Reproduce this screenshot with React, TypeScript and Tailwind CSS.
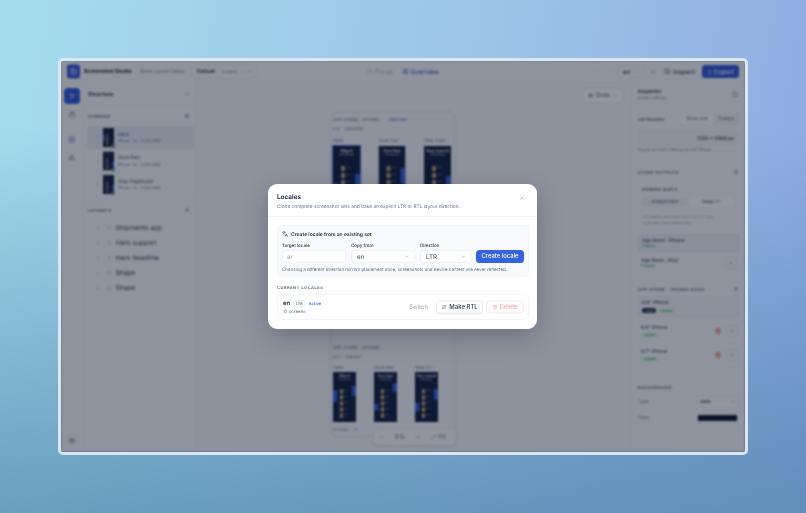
import { ArrowRightLeft, ArrowLeft, ArrowRight, ChevronDown, Download, Focus, Grip, GripVertical, Hand, Languages, Layers, Link2, Maximize2, Minus, MousePointer2, PanelRight, Plus, Shapes, Square, Trash2, Type, X, LayoutGrid, Archive, Image } from 'lucide-react';

const screens = [
  { name: 'Hero', active: true },
  { name: 'Save Fast', active: false },
  { name: 'Stay Organized', active: false },
];

const layers = [
  { name: 'Shipments app', text: false },
  { name: 'Hero support', text: true },
  { name: 'Hero headline', text: true },
  { name: 'Shape', text: false },
  { name: 'Shape', text: false },
];

interface Bar {
  y: number;
  h: number;
  right?: boolean;
}

const topRow = [
  { label: 'Hero', title: 'Ship it', bars: [{ y: 37, h: 20 }, { y: 28, h: 14, right: true }] },
  { label: 'Save Fast', title: 'Save fast', bars: [{ y: 22, h: 16, right: true }] },
  { label: 'Stop Orga...', title: 'Stay synced', bars: [{ y: 30, h: 14, right: true }] },
];

const bottomRow = [
  { label: 'Hero', title: 'Ship it', bars: [{ y: 21, h: 14 }, { y: 16, h: 12, right: true }] },
  { label: 'Save Fast', title: 'Save fast', bars: [{ y: 13, h: 10, right: true }, { y: 37, h: 8 }] },
  { label: 'Stop Or...', title: 'Stay synced', bars: [{ y: 36, h: 10 }, { y: 20, h: 12, right: true }] },
];

function PhoneThumb({ title, bars, width, height }: { title: string; bars: Bar[]; width: number; height: number }) {
  return (
    <svg width={width} height={height} viewBox="0 0 27 58" preserveAspectRatio="none" className="block">
      <rect width="27" height="58" fill="#0c1a3a" />
      <text x="13.5" y="6" textAnchor="middle" fontSize="4.5" fontWeight="700" fill="#fff" fontFamily="Liberation Serif, serif">{title}</text>
      <rect x="6" y="8" width="15" height="1" fill="#8a94ad" />
      {bars.map((b, i) => (
        <rect key={i} x={b.right ? 22 : 0} y={b.y} width="5" height={b.h} fill="#2f5fd8" />
      ))}
      {[20, 27, 34, 41, 48].map((y) => (
        <g key={y}>
          <rect x="8" y={y} width="4" height="5" fill="#b89e78" />
          <rect x="13" y={y + 1} width="5" height="1" fill="#59647f" />
        </g>
      ))}
    </svg>
  );
}

function Pill({ children, green }: { children: React.ReactNode; green?: boolean }) {
  return <span className={`px-[3px] h-[5px] flex items-center rounded-full text-[3.5px] ${green ? 'bg-[#d6f5e0] text-[#168a4a]' : 'bg-[#14213d] text-white'}`}>{children}</span>;
}

function SectionHead({ label, plus }: { label: string; plus?: boolean }) {
  return (
    <div className="flex items-center justify-between h-[8px]">
      <span className="text-[4px] font-semibold tracking-[0.14em] text-[#475569]">{label}</span>
      {plus && <Plus size={6} strokeWidth={2.5} className="text-[#3b5bb5]" />}
    </div>
  );
}

function AppBehind() {
  return (
    <div className="w-full h-full flex flex-col bg-[#f8fafc] text-[#0f172a] blur-[1.2px]">
      <header className="h-[22px] shrink-0 flex items-center pl-[6px] pr-[6px] border-b border-[#eef1f6]">
        <div className="w-[13px] h-[14px] rounded-[3px] bg-[#2d54d8] flex items-center justify-center">
          <Image size={7} className="text-white" />
        </div>
        <span className="ml-[4px] w-[47px] whitespace-nowrap text-[5.3px] font-bold">Screenshot Studio</span>
        <span className="ml-[9px] w-[45px] whitespace-nowrap text-[4.8px] text-[#64748b]">Store Launch Demo</span>
        <div className="ml-[5px] w-[68px] h-[15px] rounded-full border border-[#e8ecf2] flex items-center pl-[6px] gap-[7px]">
          <span className="text-[5.2px] font-semibold">Default</span>
          <span className="text-[4px] text-[#64748b]">Isolated</span>
          <ChevronDown size={5} className="ml-[3px] text-[#64748b]" />
        </div>
        <div className="ml-[109px] flex items-center gap-[10px]">
          <div className="flex items-center gap-[2px] text-[#94a3b8]">
            <Focus size={6} />
            <span className="text-[6.2px]">Focus</span>
          </div>
          <div className="flex items-center gap-[2px] text-[#3556b8]">
            <LayoutGrid size={6} />
            <span className="text-[6.2px] font-medium">Overview</span>
          </div>
        </div>
        <div className="ml-auto flex items-center">
          <ArrowLeft size={5} className="text-[#cbd5e1]" />
          <ArrowRight size={5} className="ml-[8px] text-[#cbd5e1]" />
          <div className="ml-[4px] w-[28px] h-[13px] rounded-[4px] border border-[#eceff4] flex items-center pl-[5px] gap-[5px]">
            <span className="text-[6px] font-medium">en</span>
            <ChevronDown size={4} className="text-[#94a3b8]" />
          </div>
          <Link2 size={6} className="ml-[5px] text-[#94a3b8]" />
          <PanelRight size={6} className="ml-[8px] text-[#334155]" />
          <span className="ml-[3px] text-[6.2px] font-medium text-[#334155]">Inspect</span>
          <div className="ml-[7px] w-[37px] h-[13px] rounded-[3px] bg-[#2d54d8] flex items-center justify-center gap-[2px] text-white">
            <Download size={5} />
            <span className="text-[6.2px] font-medium">Export</span>
          </div>
        </div>
      </header>
      <div className="flex-1 flex min-h-0">
        <nav className="w-[22px] shrink-0 flex flex-col items-center pt-[5px]">
          <div className="w-[16px] h-[16px] rounded-[4px] bg-[#2d54d8] flex items-center justify-center">
            <MousePointer2 size={7} className="text-white" />
          </div>
          <Hand size={7} className="mt-[7px] text-[#64748b]" />
          <Layers size={7} className="mt-[18px] text-[#4763b8]" />
          <Shapes size={7} className="mt-[11px] text-[#64748b]" />
          <div className="mt-auto mb-[4px] w-[14px] h-[14px] rounded-[3px] border border-[#eceff4] flex items-center justify-center">
            <Archive size={6} className="text-[#475569]" />
          </div>
        </nav>
        <aside className="w-[113px] shrink-0 border-x border-[#f0f2f6] flex flex-col">
          <div className="h-[23px] flex items-center justify-between pl-[4px] pr-[5px] border-b border-[#f0f2f6]">
            <span className="text-[5.6px] font-semibold">Structure</span>
            <X size={5} className="text-[#64748b]" />
          </div>
          <div className="pl-[4px] pr-[5px] pt-[6px]">
            <SectionHead label="SCREENS" plus />
          </div>
          <div className="pl-[3px] pr-[1px] pt-[6px] pb-[4px] flex flex-col border-b border-[#f0f2f6]">
            {screens.map((s, i) => (
              <div key={s.name} className={`h-[23.4px] flex items-center rounded-[4px] pl-[8px] ${s.active ? 'bg-[#e8ebf2]' : ''}`}>
                <GripVertical size={4} className="text-[#cbd5e1]" />
                <div className="relative ml-[4px]">
                  <PhoneThumb title="" bars={i === 0 ? [{ y: 22, h: 16 }] : [{ y: 32, h: 12, right: true }]} width={11} height={19} />
                  <span className="absolute right-[-1px] bottom-[-1px] w-[4px] h-[4px] rounded-full bg-[#64748b]" />
                </div>
                <div className="ml-[4px] flex flex-col">
                  <span className={`text-[4.8px] leading-[7px] ${s.active ? 'text-[#2d54d8] font-medium' : 'text-[#334155]'}`}>{s.name}</span>
                  <span className="text-[3.7px] leading-[6px] text-[#64748b]">iPhone · en · 1320x2868</span>
                </div>
              </div>
            ))}
          </div>
          <div className="pl-[4px] pr-[5px] pt-[5px]">
            <SectionHead label="LAYERS  5" plus />
          </div>
          <div className="pl-[12px] pt-[6px] flex flex-col">
            {layers.map((l, i) => (
              <div key={i} className="h-[15.2px] flex items-center text-[#334155]">
                <GripVertical size={4} className="text-[#cbd5e1]" />
                <span className="ml-[7px] mr-[4px]">
                  {l.text ? <Type size={4.5} className="text-[#94a3b8]" /> : <Square size={4.5} className="text-[#94a3b8]" />}
                </span>
                <span className="text-[6.6px]">{l.name}</span>
              </div>
            ))}
          </div>
        </aside>
        <main className="relative flex-1 bg-[#f6f7fa] pt-[28px] pl-[134px]">
          <div className="absolute top-[5px] right-[8px] w-[41px] h-[15px] rounded-[4px] bg-white border border-[#eceff4] flex items-center justify-center gap-[3px] text-[#475569]">
            <Grip size={5} />
            <span className="text-[6.5px]">Dots</span>
            <ChevronDown size={4} />
          </div>
          <div className="w-[125px] h-[326px] rounded-[8px] border border-[#e2e5ec] px-[2px] pt-[5px]">
            <div className="flex gap-[9px] text-[3.8px] font-semibold tracking-[0.12em] text-[#64748b] h-[6px] items-center">
              <span>APP STORE · IPHONE</span>
              <span className="text-[#3b5bd0]">EDITING</span>
            </div>
            <div className="flex gap-[4px] text-[3.5px] font-semibold tracking-[0.05em] text-[#64748b] mt-[3px] h-[6px] items-center">
              <span>6.9"</span>
              <span>ISOLATED</span>
            </div>
            <div className="mt-[6px] flex gap-[18.5px]">
              {topRow.map((t, i) => (
                <div key={t.label} className="w-[27px]">
                  <div className={`text-[4.4px] h-[6px] leading-[6px] whitespace-nowrap ${i === 0 ? 'text-[#3b5bd0]' : 'text-[#64748b]'}`}>{t.label}</div>
                  <div className={`mt-[2px] ${i === 0 ? 'outline outline-[#4f6fd8]' : ''}`}>
                    <PhoneThumb title={t.title} bars={t.bars} width={27} height={58} />
                  </div>
                </div>
              ))}
            </div>
            <div className="mt-[141px] flex flex-col">
              <div className="text-[3.8px] font-semibold tracking-[0.12em] text-[#64748b] h-[6px] flex items-center">APP STORE · IPHONE</div>
              <div className="flex gap-[4px] text-[3.5px] font-semibold tracking-[0.05em] text-[#64748b] mt-[3px] h-[6px] items-center">
                <span>6.7"</span>
                <span>VARIANT</span>
              </div>
              <div className="mt-[5px] flex gap-[18px]">
                {bottomRow.map((t) => (
                  <div key={t.label} className="w-[23px]">
                    <div className="text-[4.4px] h-[6px] leading-[6px] whitespace-nowrap text-[#64748b]">{t.label}</div>
                    <div className="mt-[1px]">
                      <PhoneThumb title={t.title} bars={t.bars} width={23} height={50} />
                    </div>
                  </div>
                ))}
              </div>
              <span className="mt-[5px] text-[3.8px] text-[#64748b] tracking-[0.08em]">IPHONE · 14</span>
            </div>
          </div>
          <div className="absolute top-[346px] left-[178px] w-[81px] h-[16px] rounded-[4px] bg-[#fdfdfe] shadow-[0_1px_3px_rgba(15,23,42,0.15)] flex items-center justify-around pr-[4px] text-[#64748b]">
            <Minus size={5} />
            <span className="text-[6.5px] font-medium">5%</span>
            <Plus size={5} />
            <span className="flex items-center gap-[2px] text-[6.5px]"><Maximize2 size={5} />Fit</span>
          </div>
        </main>
        <aside className="w-[114px] shrink-0 border-l border-[#f0f2f6] flex flex-col px-[6px]">
          <div className="h-[23px] flex items-center justify-between">
            <div className="flex flex-col">
              <span className="text-[5.2px] font-semibold leading-[7px]">Inspector</span>
              <span className="text-[3.8px] leading-[6px] text-[#64748b]">Screen settings</span>
            </div>
            <PanelRight size={6} className="text-[#64748b] mr-[1px]" />
          </div>
          <div className="mt-[7px] flex items-center justify-between">
            <span className="text-[4px] font-semibold tracking-[0.14em] text-[#475569]">ARTBOARD</span>
            <div className="w-[60px] h-[12px] rounded-[3px] bg-[#eff2f6] flex items-center p-[1px] text-[4.6px] text-[#475569]">
              <span className="w-[34px] h-full rounded-[2px] bg-white flex items-center justify-center">Store size</span>
              <span className="flex-1 text-center">Custom</span>
            </div>
          </div>
          <div className="mt-[5px] h-[16px] rounded-[3px] bg-[#f3f5f8] flex items-center justify-end pr-[5px] text-[5px] font-medium text-[#334155]">1320 × 2868 px</div>
          <div className="mt-[1px] h-[6px] text-[3.7px] leading-[6px] text-[#64748b] whitespace-nowrap">Exports at 1320 × 2868 px for 6.9" iPhone.</div>
          <div className="mt-[15px]"><SectionHead label="STORE OUTPUTS" plus /></div>
          <div className="mt-[10px] pl-[4px] pr-[5px] h-[44px] flex flex-col">
            <span className="text-[4px] font-semibold tracking-[0.12em] text-[#475569] h-[6px] leading-[6px]">SCREEN SLOTS</span>
            <div className="mt-[5px] h-[10px] rounded-[3px] bg-[#eff2f6] flex text-[4.5px] text-[#475569]">
              <span className="w-[46px] flex items-center justify-center">Independent</span>
              <span className="flex-1 bg-white rounded-[3px] flex items-center justify-center font-medium">Keep 1:1</span>
            </div>
            <span className="mt-[7px] text-[3.6px] leading-[6px] text-[#94a3b8] whitespace-nowrap">Add, delete, and order mirror across sizes.<br />Layer edits stay independent.</span>
          </div>
          <div className="mt-[4px] h-[18px] rounded-[3px] bg-[#eef1f7] border border-[#e4e8f0] px-[3px] flex flex-col justify-center">
            <span className="text-[4.8px] font-medium leading-[6px] text-[#334155]">App Store · iPhone</span>
            <span className="text-[3.6px] leading-[5px] text-[#16a34a]">Created</span>
          </div>
          <div className="mt-[1px] h-[20px] px-[3px] flex items-center justify-between">
            <div className="flex flex-col">
              <span className="text-[4.8px] font-medium leading-[6px] text-[#334155]">App Store · iPad</span>
              <span className="text-[3.6px] leading-[5px] text-[#16a34a]">Created</span>
            </div>
            <div className="w-[12px] h-[12px] rounded-[3px] border border-[#e8ebf1] flex items-center justify-center mr-[-1px]"><Plus size={4} className="text-[#64748b]" /></div>
          </div>
          <div className="mt-[12px]"><SectionHead label="APP STORE · IPHONE SIZES" plus /></div>
          <div className="mt-[3px] h-[21px] rounded-[3px] bg-[#f3f5f9] border border-[#e8ebf1] px-[3px] flex flex-col justify-center gap-[2px]">
            <span className="text-[4.8px] font-medium leading-[6px] text-[#334155]">6.9" iPhone</span>
            <div className="flex gap-[2px]"><Pill>Lead</Pill><Pill green>master</Pill></div>
          </div>
          {['6.5" iPhone', '6.7" iPhone'].map((s) => (
            <div key={s} className="mt-[4px] h-[20px] px-[3px] flex items-center">
              <div className="flex flex-col gap-[2px]">
                <span className="text-[4.8px] font-medium leading-[6px] text-[#334155]">{s}</span>
                <div className="flex"><Pill green>variant</Pill></div>
              </div>
              <Trash2 size={6} className="ml-auto text-[#dc2626]" />
              <div className="ml-[5px] mr-[-2px] w-[12px] h-[12px] rounded-[3px] border border-[#e8ebf1] flex items-center justify-center"><Plus size={4} className="text-[#64748b]" /></div>
            </div>
          ))}
          <div className="mt-[18px]"><SectionHead label="BACKGROUND" /></div>
          <div className="mt-[5px] h-[12px] flex items-center justify-between">
            <span className="text-[4.6px] text-[#64748b]">Type</span>
            <div className="w-[43px] h-[12px] rounded-[3px] bg-white border border-[#eceff4] flex items-center justify-between px-[3px] text-[4.6px] font-medium">solid<ChevronDown size={4} /></div>
          </div>
          <div className="mt-[4px] h-[12px] flex items-center justify-between">
            <span className="text-[4.6px] text-[#64748b]">Color</span>
            <div className="w-[43px] h-[12px] rounded-[3px] bg-white border border-[#eceff4] flex items-center justify-center"><div className="w-[39px] h-[6px] bg-[#07122e]"></div></div>
          </div>
        </aside>
      </div>
    </div>
  );
}

function LocalesModal() {
  return (
    <div className="-ml-[1px] w-[269px] h-[145px] rounded-[9px] bg-white flex flex-col text-[#0f172a] shadow-[0_8px_24px_rgba(15,23,42,0.25)] blur-[0.3px]">
      <div className="h-[33px] shrink-0 border-b border-[#f1f5f9] pl-[9px] pr-[12px] pt-[8px] flex justify-between">
        <div className="flex flex-col">
          <span className="text-[6.4px] font-semibold leading-[10px]">Locales</span>
          <span className="mt-[1px] text-[4.8px] leading-[8px] text-[#64748b]">Clone complete screenshot sets and bake an explicit LTR or RTL layout direction.</span>
        </div>
        <X size={6.5} className="mt-[3px] text-[#94a3b8]" />
      </div>
      <div className="flex-1 pl-[9px] pr-[8px] pt-[8px]">
        <div className="h-[52px] rounded-[5px] bg-[#f8fafc] border border-[#f1f5f9] px-[4px] pt-[4px]">
          <div className="flex items-center gap-[3px] h-[8px]">
            <Languages size={6} className="text-[#334155]" />
            <span className="text-[5px] font-semibold text-[#1e293b]">Create locale from an existing set</span>
          </div>
          <div className="mt-[4px] flex items-end gap-[5px]">
            <label className="w-[64px] flex flex-col">
              <span className="text-[4.5px] h-[7px] leading-[7px] text-[#334155] font-medium">Target locale</span>
              <span className="mt-[1px] h-[13px] rounded-[3.5px] bg-white border border-[#eef1f5] flex items-center pl-[4px] text-[6.2px] text-[#94a3b8]">ar</span>
            </label>
            <label className="w-[64px] flex flex-col">
              <span className="text-[4.5px] h-[7px] leading-[7px] text-[#334155] font-medium">Copy from</span>
              <span className="mt-[1px] h-[13px] rounded-[3.5px] bg-white border border-[#eef1f5] flex items-center justify-between px-[5px] text-[6.2px] text-[#334155]">en<ChevronDown size={5} className="text-[#64748b]" /></span>
            </label>
            <label className="w-[52px] flex flex-col">
              <span className="text-[4.5px] h-[7px] leading-[7px] text-[#334155] font-medium">Direction</span>
              <span className="mt-[1px] h-[13px] rounded-[3.5px] bg-white border border-[#eef1f5] flex items-center justify-between px-[5px] text-[6.2px] text-[#334155]">LTR<ChevronDown size={5} className="text-[#64748b]" /></span>
            </label>
            <button className="-ml-[1px] w-[48px] h-[13px] rounded-[3.5px] bg-[#3563e0] text-white text-[5.9px] font-medium flex items-center justify-center whitespace-nowrap">Create locale</button>
          </div>
          <div className="mt-[3px] text-[4.45px] leading-[7px] text-[#64748b] whitespace-nowrap">Choosing a different direction mirrors placement once; screenshots and device content are never reflected.</div>
        </div>
        <div className="mt-[8px] h-[6px] flex items-center text-[3.9px] font-semibold tracking-[0.15em] text-[#475569]">CURRENT LOCALES</div>
        <div className="mt-[3px] h-[26px] rounded-[5px] border border-[#f1f5f9] pl-[5px] pr-[4px] flex items-center">
          <div className="flex flex-col">
            <div className="flex items-center h-[8px]">
              <span className="text-[5.8px] font-semibold">en</span>
              <span className="ml-[3px] px-[2px] h-[6px] flex items-center rounded-[2px] border border-[#e2e8f0] text-[3.8px] font-medium text-[#475569]">LTR</span>
              <span className="ml-[3px] text-[4.2px] font-medium text-[#3563e0]">Active</span>
            </div>
            <span className="mt-[1px] text-[4.5px] leading-[6px] text-[#64748b]">12 screens</span>
          </div>
          <span className="ml-auto text-[6px] text-[#9ca3af]">Switch</span>
          <button className="ml-[8px] w-[47px] h-[13px] rounded-[3.5px] bg-white border border-[#e8ebf0] flex items-center justify-center gap-[3px] text-[6px] font-medium text-[#334155] shadow-[0_1px_1px_rgba(15,23,42,0.05)]">
            <ArrowRightLeft size={5} />
            Make RTL
          </button>
          <button className="ml-[3px] w-[38px] h-[13px] rounded-[3.5px] bg-white border border-[#f8e8e8] flex items-center justify-center gap-[2px] text-[6px] text-[#eba3a3]">
            <Trash2 size={5} />
            Delete
          </button>
        </div>
      </div>
    </div>
  );
}

export default function App() {
  return (
    <div className="w-[806px] h-[513px] overflow-hidden p-[58px] font-['Inter',sans-serif] [text-rendering:geometricPrecision] bg-[linear-gradient(180deg,rgba(70,130,160,0)_25%,rgba(70,125,165,0.62)_100%),linear-gradient(100deg,#a4dcec_0%,#9cc4e8_55%,#8da8e0_100%)]">
      <div className="w-[690px] h-[397px] rounded-[5px] border-[3px] border-[#dbe6f1] overflow-hidden">
        {/* the window is a 2x layout shrunk down, so small text keeps its real widths */}
        <div className="relative w-[684px] h-[391px] origin-top-left scale-50 [zoom:2]">
          <AppBehind />
          <div className="absolute inset-0 bg-[#0f172a]/45 flex items-center justify-center">
            <LocalesModal />
          </div>
        </div>
      </div>
    </div>
  );
}
